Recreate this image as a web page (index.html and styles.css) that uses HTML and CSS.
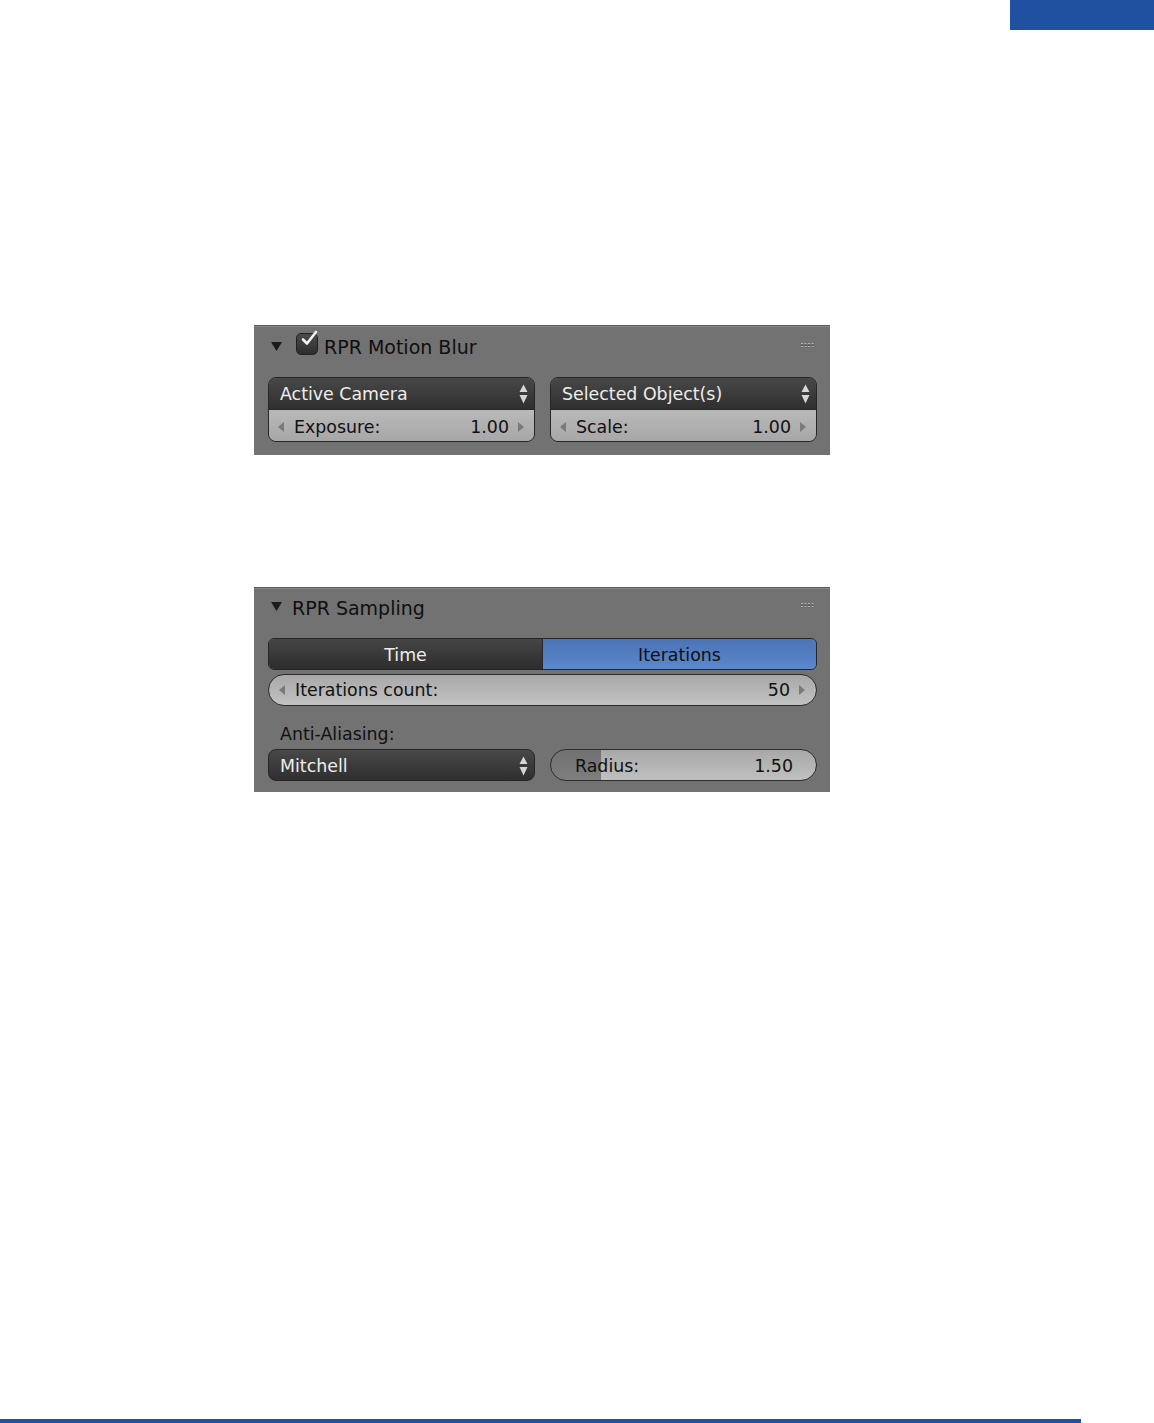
FILE: index.html
```html
<!DOCTYPE html>
<html>
<head>
<meta charset="utf-8">
<link rel="stylesheet" href="styles.css">
</head>
<body>
<div class="page">
  <div class="topbar"><div class="corner-tab"></div></div>

  <section class="panel panel-blur">
    <div class="panel-head">
      <svg class="disclosure" width="11" height="9" viewBox="0 0 11 9"><path d="M0 0H11L5.5 9Z" fill="#1b1b1b"/></svg>
      <span class="checkbox">
        <svg class="check" width="20" height="20" viewBox="0 0 20 20"><path d="M4 10.5L8 14.5L17 3" fill="none" stroke="#f2f2f2" stroke-width="2.6" stroke-linecap="round" stroke-linejoin="round"/></svg>
      </span>
      <span class="panel-title">RPR Motion Blur</span>
      <svg class="grip" width="13" height="5" viewBox="0 0 13 5">
        <g fill="#b4b4b4"><rect x="0" y="0" width="2" height="1.5"/><rect x="3.5" y="0" width="2" height="1.5"/><rect x="7" y="0" width="2" height="1.5"/><rect x="10.5" y="0" width="2" height="1.5"/><rect x="0" y="3" width="2" height="1.5"/><rect x="3.5" y="3" width="2" height="1.5"/><rect x="7" y="3" width="2" height="1.5"/><rect x="10.5" y="3" width="2" height="1.5"/></g>
        <g fill="#3a3a3a"><rect x="0" y="1.5" width="2" height="1"/><rect x="3.5" y="1.5" width="2" height="1"/><rect x="7" y="1.5" width="2" height="1"/><rect x="10.5" y="1.5" width="2" height="1"/><rect x="0" y="4.5" width="2" height="0.5"/><rect x="3.5" y="4.5" width="2" height="0.5"/><rect x="7" y="4.5" width="2" height="0.5"/><rect x="10.5" y="4.5" width="2" height="0.5"/></g>
      </svg>
    </div>
    <div class="panel-body">
      <div class="cols">
        <div class="combo">
          <div class="dd">
            <span class="dd-text">Active Camera</span>
            <svg class="updown" width="9" height="21" viewBox="0 0 9 21"><path d="M0.5 8L4.5 0.5L8.5 8Z M0.5 11H8.5L4.5 19.5Z" fill="#d6d6d6"/></svg>
          </div>
          <div class="num">
            <svg class="arr" width="6" height="10" viewBox="0 0 6 10"><path d="M6 0V10L0 5Z" fill="#7a7a7a"/></svg>
            <span class="num-label">Exposure:</span>
            <span class="num-value">1.00</span>
            <svg class="arr arr-r" width="6" height="10" viewBox="0 0 6 10"><path d="M0 0V10L6 5Z" fill="#7a7a7a"/></svg>
          </div>
        </div>
        <div class="combo">
          <div class="dd">
            <span class="dd-text">Selected Object(s)</span>
            <svg class="updown" width="9" height="21" viewBox="0 0 9 21"><path d="M0.5 8L4.5 0.5L8.5 8Z M0.5 11H8.5L4.5 19.5Z" fill="#d6d6d6"/></svg>
          </div>
          <div class="num">
            <svg class="arr" width="6" height="10" viewBox="0 0 6 10"><path d="M6 0V10L0 5Z" fill="#7a7a7a"/></svg>
            <span class="num-label">Scale:</span>
            <span class="num-value">1.00</span>
            <svg class="arr arr-r" width="6" height="10" viewBox="0 0 6 10"><path d="M0 0V10L6 5Z" fill="#7a7a7a"/></svg>
          </div>
        </div>
      </div>
    </div>
  </section>

  <section class="panel panel-sampling">
    <div class="panel-head head-sampling">
      <svg class="disclosure" width="11" height="9" viewBox="0 0 11 9"><path d="M0 0H11L5.5 9Z" fill="#1b1b1b"/></svg>
      <span class="panel-title title-sampling">RPR Sampling</span>
      <svg class="grip" width="13" height="5" viewBox="0 0 13 5">
        <g fill="#b4b4b4"><rect x="0" y="0" width="2" height="1.5"/><rect x="3.5" y="0" width="2" height="1.5"/><rect x="7" y="0" width="2" height="1.5"/><rect x="10.5" y="0" width="2" height="1.5"/><rect x="0" y="3" width="2" height="1.5"/><rect x="3.5" y="3" width="2" height="1.5"/><rect x="7" y="3" width="2" height="1.5"/><rect x="10.5" y="3" width="2" height="1.5"/></g>
        <g fill="#3a3a3a"><rect x="0" y="1.5" width="2" height="1"/><rect x="3.5" y="1.5" width="2" height="1"/><rect x="7" y="1.5" width="2" height="1"/><rect x="10.5" y="1.5" width="2" height="1"/><rect x="0" y="4.5" width="2" height="0.5"/><rect x="3.5" y="4.5" width="2" height="0.5"/><rect x="7" y="4.5" width="2" height="0.5"/><rect x="10.5" y="4.5" width="2" height="0.5"/></g>
      </svg>
    </div>
    <div class="panel-body body-sampling">
      <div class="tabs">
        <span class="tab">Time</span>
        <span class="tab tab-on">Iterations</span>
      </div>
      <div class="slider">
        <svg class="arr" width="6" height="10" viewBox="0 0 6 10"><path d="M6 0V10L0 5Z" fill="#7a7a7a"/></svg>
        <span class="num-label">Iterations count:</span>
        <span class="num-value">50</span>
        <svg class="arr arr-r" width="6" height="10" viewBox="0 0 6 10"><path d="M0 0V10L6 5Z" fill="#7a7a7a"/></svg>
      </div>
      <div class="field-label">Anti-Aliasing:</div>
      <div class="cols">
        <div class="dd dd-single">
          <span class="dd-text">Mitchell</span>
          <svg class="updown" width="9" height="21" viewBox="0 0 9 21"><path d="M0.5 8L4.5 0.5L8.5 8Z M0.5 11H8.5L4.5 19.5Z" fill="#d6d6d6"/></svg>
        </div>
        <div class="slider radius">
          <span class="num-label">Radius:</span>
          <span class="num-value">1.50</span>
        </div>
      </div>
    </div>
  </section>

  <div class="rule"></div>
</div>
</body>
</html>
```

FILE: styles.css
```css
html, body {
  margin: 0;
  padding: 0;
  background: #ffffff;
}

.page {
  height: 1423px;
  display: flex;
  flex-direction: column;
  font-family: "DejaVu Sans", "Liberation Sans", sans-serif;
}

.topbar {
  display: flex;
  justify-content: flex-end;
}

.corner-tab {
  width: 144px;
  height: 30px;
  background: #2051a0;
}

.panel {
  width: 576px;
  margin-left: 254px;
  background: #727272;
  border-top: 1px solid #5c5c5c;
  box-shadow: inset 0 1px 0 #868686;
  box-sizing: border-box;
}

.panel-blur {
  margin-top: 295px;
  height: 130px;
}

.panel-sampling {
  margin-top: 132px;
  height: 205px;
}

.panel-head {
  height: 42px;
  display: flex;
  align-items: center;
  padding-left: 17px;
  padding-right: 16px;
}

.head-sampling {
  height: 39px;
}

.disclosure {
  flex: none;
  margin-top: -2px;
}

.checkbox {
  position: relative;
  flex: none;
  width: 22px;
  height: 22px;
  box-sizing: border-box;
  margin-left: 14px;
  margin-top: -7px;
  border-radius: 5px;
  border: 1px solid #222222;
  background: linear-gradient(#4a4a4a, #2e2e2e);
}

.check {
  position: absolute;
  left: 2px;
  top: -5px;
}

.panel-title {
  font-size: 19px;
  color: #0f0f0f;
  margin-left: 6px;
}

.title-sampling {
  margin-left: 10px;
}

.grip {
  margin-left: auto;
  margin-top: -4px;
}

.panel-body {
  padding: 9px 13px 0 14px;
}

.body-sampling {
  padding-top: 11px;
}

.cols {
  display: flex;
  gap: 15px;
}

.cols > .combo,
.cols > .dd-single,
.cols > .radius {
  flex: 0 0 calc(50% - 7.5px);
  box-sizing: border-box;
  min-width: 0;
}

.combo {
  border: 1px solid #262626;
  border-radius: 8px;
  overflow: hidden;
  height: 65px;
  display: flex;
  flex-direction: column;
}

.dd {
  height: 31px;
  display: flex;
  align-items: center;
  padding: 1px 6px 0 11px;
  background: linear-gradient(#484848, #2f2f2f);
  border-bottom: 1px solid #2a2a2a;
  box-sizing: border-box;
  flex: none;
}

.combo .dd {
  height: 32px;
}

.dd-single {
  height: 32px;
  border: 1px solid #262626;
  border-radius: 8px;
  padding-top: 2px;
  padding-left: 11px;
}

.dd-text {
  font-size: 17.4px;
  color: #ececec;
  flex: 1;
}

.updown {
  flex: none;
}

.num {
  flex: 1;
  display: flex;
  align-items: center;
  padding: 3px 10px 0 9px;
  background: linear-gradient(#b9b9b9, #a7a7a7);
}

.arr {
  flex: none;
}

.num-label {
  font-size: 17.4px;
  color: #111111;
  margin-left: 10px;
}

.num-value {
  font-size: 17.4px;
  color: #111111;
  margin-left: auto;
}

.arr-r {
  margin-left: 9px;
}

.tabs {
  display: flex;
  height: 32px;
  border: 1px solid #262626;
  border-radius: 6px;
  overflow: hidden;
  box-sizing: border-box;
}

.tab {
  display: flex;
  align-items: center;
  justify-content: center;
  padding-top: 2px;
  font-size: 17.4px;
  color: #ececec;
  background: linear-gradient(#454545, #2d2d2d);
  width: 273px;
  flex: none;
}

.tab-on {
  flex: 1;
  width: auto;
  color: #111111;
  background: linear-gradient(#4b74b6, #5b87cc);
  border-left: 1px solid #262626;
}

.slider {
  margin-top: 4px;
  height: 32px;
  box-sizing: border-box;
  border: 1px solid #2c2c2c;
  border-radius: 16px;
  display: flex;
  align-items: center;
  padding: 0 11px 0 10px;
  background: linear-gradient(#a8a8a8, #c2c2c2);
}

.field-label {
  font-size: 17.4px;
  color: #111111;
  padding-left: 12px;
  margin-top: 12px;
  height: 31px;
  display: flex;
  align-items: center;
}

.radius {
  margin-top: 0;
  padding: 2px 23px 0 24px;
  background:
    linear-gradient(90deg, rgba(60,60,60,0.5) 0, rgba(60,60,60,0.5) 50px, transparent 50px),
    linear-gradient(#a8a8a8, #c0c0c0);
}

.radius .num-label {
  margin-left: 0;
}

.rule {
  margin-top: auto;
  width: 1081px;
  height: 4px;
  background: #2051a0;
}
```
